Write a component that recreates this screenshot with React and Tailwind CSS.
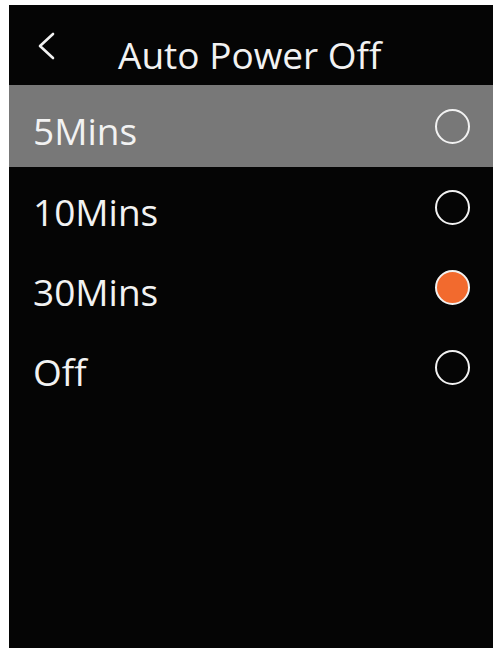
import React from 'react';

const options = [
    { label: '5Mins', selected: false },
    { label: '10Mins', selected: false },
    { label: '30Mins', selected: true },
    { label: 'Off', selected: false },
];

const App = () => {
    const active = 0;

    return (
        <div className="w-[496px] h-[656px] bg-white pt-[5px] pl-[9px]" style={{ fontFamily: '"Open Sans", sans-serif' }}>
            <div className="w-[484px] h-[643px] bg-[#050505] flex flex-col">
                {/* Header */}
                <div className="h-[80px] flex items-start relative pt-[31px]">
                    <svg className="absolute left-[28px] top-[27px]" width="20" height="28" viewBox="0 0 20 28" fill="none">
                        <path d="M16 2 L3 14 L16 26" stroke="#f2f2f2" strokeWidth="2.6" strokeLinecap="round" strokeLinejoin="round" />
                    </svg>
                    <h1 className="ml-[109px] text-[37px] text-[#f2f2f2] leading-none">Auto Power Off</h1>
                </div>

                {/* Options */}
                {options.map((opt, index) => (
                    <div
                        key={opt.label}
                        className={`flex items-center justify-between pl-[24px] pr-[23px] ${index === active ? 'bg-[#787878] h-[82px]' : 'h-[80px]'}`}
                    >
                        <span className="text-[37px] text-[#f2f2f2] leading-none mt-[8px]">{opt.label}</span>
                        {opt.selected ? (
                            <span className="w-[35px] h-[35px] rounded-full border-[2.5px] border-[#f2f2f2] bg-[#f26a2e]"></span>
                        ) : (
                            <span className="w-[35px] h-[35px] rounded-full border-[2.5px] border-[#f2f2f2]"></span>
                        )}
                    </div>
                ))}
            </div>
        </div>
    );
};

export default App;
